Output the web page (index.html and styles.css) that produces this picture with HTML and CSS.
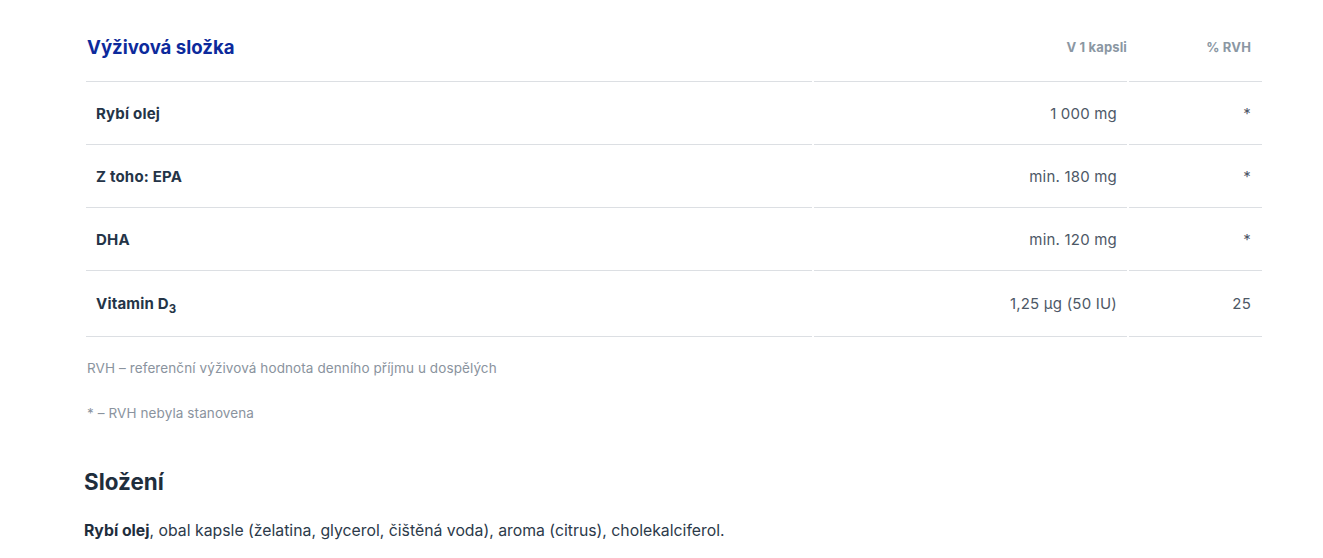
FILE: index.html
```html
<!DOCTYPE html>
<html lang="cs">
<head>
<meta charset="utf-8">
<link rel="stylesheet" href="styles.css">
</head>
<body>
<main class="page">
  <table class="nutri">
    <colgroup>
      <col class="c1"><col class="c2"><col class="c3">
    </colgroup>
    <thead>
      <tr>
        <th class="h-name">Výživová složka</th>
        <th class="h-val">V 1 kapsli</th>
        <th class="h-rvh">% RVH</th>
      </tr>
    </thead>
    <tbody>
      <tr><td class="name">Rybí olej</td><td class="val">1 000 mg</td><td class="rvh">*</td></tr>
      <tr><td class="name">Z toho: EPA</td><td class="val">min. 180 mg</td><td class="rvh">*</td></tr>
      <tr><td class="name">DHA</td><td class="val">min. 120 mg</td><td class="rvh">*</td></tr>
      <tr class="last"><td class="name">Vitamin D<sub>3</sub></td><td class="val">1,25 µg (50 IU)</td><td class="rvh">25</td></tr>
    </tbody>
  </table>
  <p class="note">RVH – referenční výživová hodnota denního příjmu u dospělých</p>
  <p class="note">* – RVH nebyla stanovena</p>
  <h2 class="title">Složení</h2>
  <p class="text"><strong>Rybí olej</strong>, obal kapsle (želatina, glycerol, čištěná voda), aroma (citrus), cholekalciferol.</p>
</main>
</body>
</html>
```
FILE: styles.css
```css
html, body {
  margin: 0;
  padding: 0;
  background: #ffffff;
}
body {
  font-family: Inter, "Noto Sans", sans-serif;
}
.page {
  width: 1180px;
  margin-left: 84px;
  padding-top: 15px;
}
.nutri {
  width: 1180px;
  table-layout: fixed;
  border-collapse: separate;
  border-spacing: 2px 0;
}
.c1 { width: 726px; }
.c2 { width: 313px; }
.c3 { width: 133px; }
.nutri th {
  padding: 19px 0 21px;
  line-height: 26px;
  border-bottom: 1px solid #dcdfe3;
  font-weight: 700;
}
.h-name {
  text-align: left;
  font-size: 18.6px;
  color: #0d2a9c;
  padding-left: 1px !important;
}
.h-val, .h-rvh {
  text-align: right;
  font-size: 13px;
  letter-spacing: 0.15px;
  color: #8b97a3;
}
.h-rvh { padding-right: 11px !important; }
.nutri td {
  padding: 21px 10px 19px;
  line-height: 22px;
  font-size: 15px;
  letter-spacing: 0.2px;
  border-bottom: 1px solid #dcdfe3;
}
.nutri .last td { padding-top: 22px; padding-bottom: 21px; }
.name {
  font-weight: 700;
  color: #243447;
}
.name sub {
  font-size: 11.5px;
  line-height: 0;
}
.val, .rvh {
  text-align: right;
  color: #4d5866;
}
.rvh { padding-right: 11px !important; }
.note {
  margin: 21px 0 0 3px;
  font-size: 13.5px;
  letter-spacing: 0.1px;
  line-height: 20px;
  color: #8a939e;
}
.note + .note { margin-top: 25px; }
.title {
  margin: 44px 0 0 0;
  font-size: 22.4px;
  line-height: 30px;
  font-weight: 700;
  color: #1f2e3d;
}
.text {
  margin: 22px 0 0 0;
  font-size: 15.8px;
  line-height: 24px;
  color: #2c3a4a;
}
.text strong { font-weight: 700; color: #1f2e3d; }
```
